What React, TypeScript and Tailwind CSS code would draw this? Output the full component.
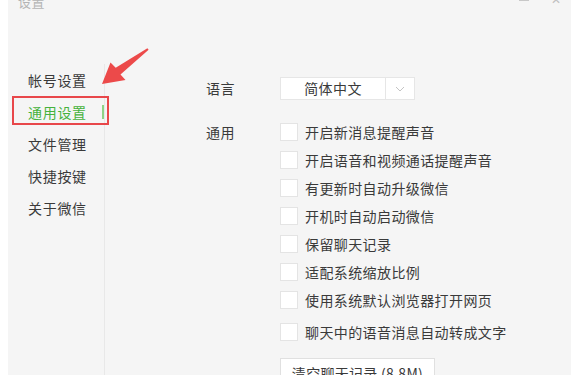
import React from "react";

const menu = ["帐号设置", "通用设置", "文件管理", "快捷按键", "关于微信"];

const options = [
  "开启新消息提醒声音",
  "开启语音和视频通话提醒声音",
  "有更新时自动升级微信",
  "开机时自动启动微信",
  "保留聊天记录",
  "适配系统缩放比例",
  "使用系统默认浏览器打开网页",
];

function Check({ label }: { label: string }) {
  return (
    <div className="h-[28px] flex items-center gap-[7px]">
      <span className="w-[18px] h-[18px] bg-white border border-[#e4e4e4] shrink-0" />
      <span className="tracking-[0.4px]">{label}</span>
    </div>
  );
}

export default function App() {
  return (
    <div
      className="w-[571px] h-[375px] overflow-hidden bg-white flex relative text-[14px] text-[#3a3a3a]"
      style={{ fontFamily: '"Noto Sans CJK SC", "Noto Sans", sans-serif' }}
    >
      <div className="w-[8px] bg-white shrink-0" />
      <div className="flex-1 bg-[#f5f5f5] flex flex-col">
        {/* title bar */}
        <div className="h-[64px] flex justify-between items-start shrink-0">
          <span className="ml-[10px] -mt-[8px] text-[13px] text-[#b4b4b4] tracking-[0.5px]">设置</span>
          <div className="flex items-start gap-[22px] mr-[10px] -mt-[1px]">
            <span className="w-[10px] h-[1px] bg-[#c8c8c8] mt-[1px]" />
            <span className="text-[12px] leading-none text-[#c0c0c0] -mt-[6px]">✕</span>
          </div>
        </div>

        <div className="flex flex-1">
          {/* sidebar */}
          <div className="w-[97px] border-r border-[#e8e8e8] shrink-0">
            {menu.map((m, i) => (
              <div key={m} className="h-[32px] flex items-center pl-[20px] relative">
                <span className={`tracking-[0.7px] ${i === 1 ? "text-[#46b23c]" : "text-[#3a3a3a]"}`}>{m}</span>
                {i === 1 && <span className="absolute right-[0px] top-[9px] w-[2px] h-[14px] bg-[#8fd386]" />}
              </div>
            ))}
          </div>

          {/* content */}
          <div className="pl-[101px] pt-[13px]">
            <div className="flex items-center">
              <span className="w-[74px] tracking-[0.4px]">语言</span>
              <div className="flex h-[23px] bg-white border border-[#e6e6e6]">
                <div className="w-[104px] flex items-center justify-center tracking-[0.4px]">简体中文</div>
                <div className="w-[29px] border-l border-[#e6e6e6] flex items-center justify-center">
                  <svg width="10" height="6" viewBox="0 0 10 6" fill="none">
                    <path d="M1 1l4 4 4-4" stroke="#c4c4c4" strokeWidth="1" />
                  </svg>
                </div>
              </div>
            </div>

            <div className="flex mt-[18px]">
              <span className="w-[74px] h-[28px] flex items-center tracking-[0.4px]">通用</span>
              <div className="flex flex-col">
                {options.map((o) => (
                  <Check key={o} label={o} />
                ))}
                <div className="mt-[4px]">
                  <Check label="聊天中的语音消息自动转成文字" />
                </div>
                <button className="mt-[12px] w-[155px] h-[30px] bg-white border border-[#e0e0e0] text-[14px] text-[#3a3a3a] tracking-[0.3px]">
                  清空聊天记录 (8.8M)
                </button>
              </div>
            </div>
          </div>
        </div>
      </div>

      {/* annotation: red box + arrow */}
      <div className="absolute left-[12px] top-[96px] w-[97px] h-[29px] border-2 border-[#e8474a]" />
      <svg className="absolute left-0 top-0" width="160" height="100" viewBox="0 0 160 100">
        <polygon
          points="148.6,49.8 120.5,74.5 125.5,80 102,84 110.5,62.5 115.7,67.7 147.4,48.2"
          fill="#ec4a4a"
        />
      </svg>
    </div>
  );
}
